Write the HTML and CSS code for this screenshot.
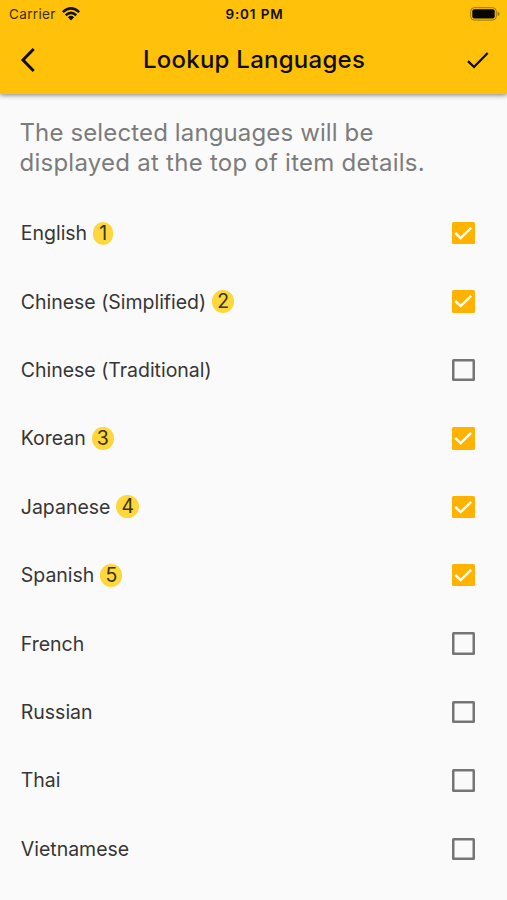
FILE: index.html
```html
<!DOCTYPE html>
<html lang="en">
<head>
<meta charset="utf-8">
<title>Lookup Languages</title>
<link rel="stylesheet" href="styles.css">
</head>
<body>
<svg width="0" height="0" class="defs"><symbol id="tick" viewBox="0 0 22 22"><path d="M3.2 10.8 8.5 15.8 18.8 5.8" fill="none" stroke="#fffdf5" stroke-width="2.4"/></symbol></svg>
<header class="header">
  <div class="status">
    <div class="carrier"><span>Carrier</span>
      <svg class="wifi" viewBox="0 0 18 14" width="18" height="14"><g fill="none" stroke="#171200" stroke-width="2.5"><path d="M.8 5.1Q9-2.4 17.2 5.1"/><path d="M3.7 8.2Q9 3.5 14.3 8.2"/></g><path d="M5.9 10.2Q9 7.5 12.1 10.2L9 13.4Z" fill="#171200"/></svg>
    </div>
    <span class="time">9:01 PM</span>
    <svg class="battery" viewBox="0 0 30 14" width="30" height="14"><rect x=".7" y=".7" width="25.6" height="12.4" rx="3.6" fill="none" stroke="#9b7909" stroke-width="1"/><rect x="2.3" y="2.3" width="22.4" height="9.2" rx="2" fill="#080600"/><path d="M27.6 4.5Q29.6 5.4 29.6 6.9T27.6 9.3Z" fill="#9b7909"/></svg>
  </div>
  <div class="bar">
    <svg class="back" viewBox="0 0 16 26" width="16" height="26"><path d="M13.7 2 3 13 13.7 24" fill="none" stroke="#100d00" stroke-width="3"/></svg>
    <h1>Lookup Languages</h1>
    <svg class="done" viewBox="0 0 24 20" width="24" height="20"><path d="M2 11.2 8 17 21.7 3" fill="none" stroke="#100d00" stroke-width="2.3"/></svg>
  </div>
</header>
<main>
  <p class="intro"><span class="first">The selected languages will be</span><br>displayed at the top of item details.</p>
  <ul class="list">
    <li><span class="name">English</span><span class="badge">1</span><span class="box on"><svg><use href="#tick"/></svg></span></li>
    <li><span class="name">Chinese (Simplified)</span><span class="badge">2</span><span class="box on"><svg><use href="#tick"/></svg></span></li>
    <li><span class="name">Chinese (Traditional)</span><span class="box"></span></li>
    <li><span class="name">Korean</span><span class="badge">3</span><span class="box on"><svg><use href="#tick"/></svg></span></li>
    <li><span class="name">Japanese</span><span class="badge">4</span><span class="box on"><svg><use href="#tick"/></svg></span></li>
    <li><span class="name">Spanish</span><span class="badge">5</span><span class="box on"><svg><use href="#tick"/></svg></span></li>
    <li><span class="name">French</span><span class="box"></span></li>
    <li><span class="name">Russian</span><span class="box"></span></li>
    <li><span class="name">Thai</span><span class="box"></span></li>
    <li><span class="name">Vietnamese</span><span class="box"></span></li>
  </ul>
</main>
</body>
</html>
```
FILE: styles.css
```css
* { box-sizing: border-box; }
body { margin: 0; height: 900px; overflow: hidden; background: #fafafa; font-family: Inter, "Liberation Sans", sans-serif; }
.defs { position: absolute; }
.header { height: 94px; background: #ffc109; box-shadow: 0 1px 5px rgba(0,0,0,.5); color: #100d00; }
.status { height: 27px; padding: 0 7px 0 9px; display: grid; grid-template-columns: 1fr auto 1fr; align-items: center; font-size: 13.5px; }
.carrier { display: flex; align-items: center; gap: 6px; color: #3b2e05; letter-spacing: .35px; }
.time { font-weight: 600; font-size: 13.5px; letter-spacing: .85px; }
.battery { justify-self: end; }
.bar { height: 65px; padding: 0 17px 0 20px; display: grid; grid-template-columns: 1fr auto 1fr; align-items: center; }
.bar h1 { margin: 0; padding-right: 2px; font-size: 24px; font-weight: 500; letter-spacing: .25px; }
.done { justify-self: end; }
.intro { margin: 0; padding: 24px 0 0 19.5px; height: 105px; font-size: 24px; line-height: 29.5px; letter-spacing: .25px; color: #7c7c7c; white-space: nowrap; }
.first { letter-spacing: .13px; }
.list { margin: 0; padding: 0; list-style: none; }
.list li { height: 68.42px; padding: 0 32.5px 0 20.8px; display: flex; align-items: center; font-size: 19.5px; color: #363636; }
.name { letter-spacing: -.02px; }
.badge { margin-left: 6px; padding: 0 5.1px; min-width: 20px; height: 23px; line-height: 23px; text-align: center; border-radius: 12px; background: #fdd73b; color: #3a310d; }
.box { margin-left: auto; width: 22.4px; height: 22.4px; box-shadow: inset 0 0 0 2.5px #757575; border-radius: 1.5px; }
.box.on { box-shadow: none; background: #ffb300; }
.box svg { display: block; width: 22.4px; height: 22.4px; }
```
